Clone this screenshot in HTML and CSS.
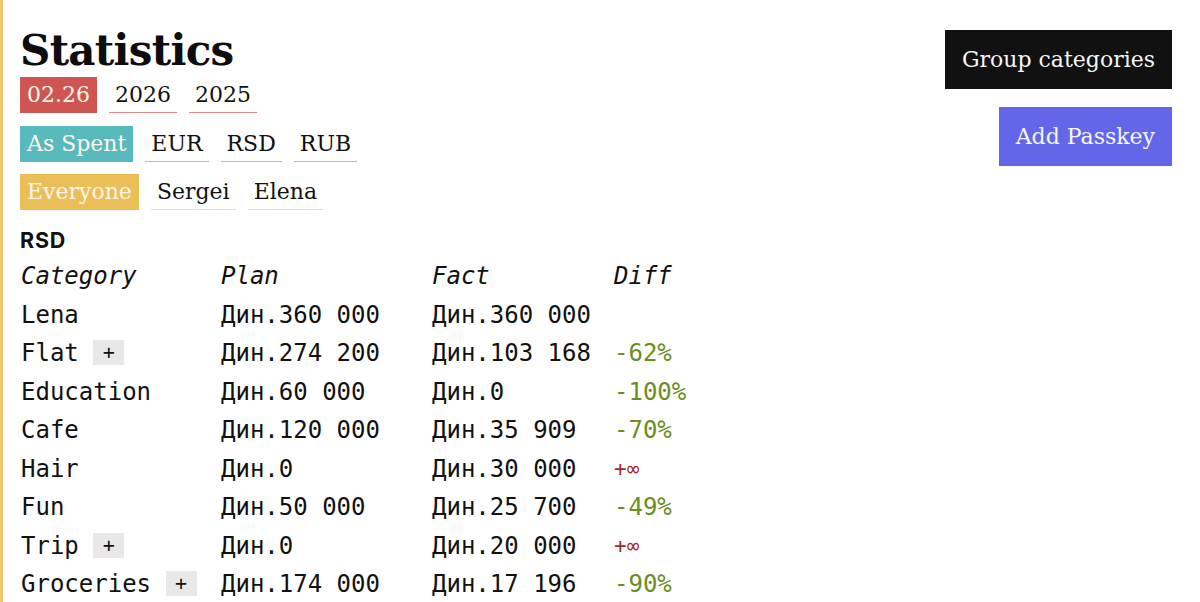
FILE: index.html
```html
<!DOCTYPE html>
<html lang="en">
<head>
<meta charset="utf-8">
<title>Statistics</title>
<link rel="stylesheet" href="styles.css">
</head>
<body>
<div class="page">
  <div class="main">
    <h1 class="title">Statistics</h1>
    <div class="tabs">
      <span class="tab tab-red active">02.26</span>
      <span class="tab tab-red">2026</span>
      <span class="tab tab-red">2025</span>
    </div>
    <div class="tabs">
      <span class="tab tab-teal active">As Spent</span>
      <span class="tab tab-teal">EUR</span>
      <span class="tab tab-teal">RSD</span>
      <span class="tab tab-teal">RUB</span>
    </div>
    <div class="tabs">
      <span class="tab tab-yellow active">Everyone</span>
      <span class="tab tab-yellow">Sergei</span>
      <span class="tab tab-yellow">Elena</span>
    </div>
    <h2 class="currency">RSD</h2>
    <div class="table">
      <div class="cell head">Category</div><div class="cell head">Plan</div><div class="cell head">Fact</div><div class="cell head">Diff</div>
      <div class="cell">Lena</div><div class="cell">Дин.360 000</div><div class="cell">Дин.360 000</div><div class="cell"></div>
      <div class="cell">Flat <span class="plus">+</span></div><div class="cell">Дин.274 200</div><div class="cell">Дин.103 168</div><div class="cell good">-62%</div>
      <div class="cell">Education</div><div class="cell">Дин.60 000</div><div class="cell">Дин.0</div><div class="cell good">-100%</div>
      <div class="cell">Cafe</div><div class="cell">Дин.120 000</div><div class="cell">Дин.35 909</div><div class="cell good">-70%</div>
      <div class="cell">Hair</div><div class="cell">Дин.0</div><div class="cell">Дин.30 000</div><div class="cell bad">+∞</div>
      <div class="cell">Fun</div><div class="cell">Дин.50 000</div><div class="cell">Дин.25 700</div><div class="cell good">-49%</div>
      <div class="cell">Trip <span class="plus">+</span></div><div class="cell">Дин.0</div><div class="cell">Дин.20 000</div><div class="cell bad">+∞</div>
      <div class="cell">Groceries <span class="plus">+</span></div><div class="cell">Дин.174 000</div><div class="cell">Дин.17 196</div><div class="cell good">-90%</div>
    </div>
  </div>
  <div class="actions">
    <button class="btn btn-dark">Group categories</button>
    <button class="btn btn-indigo">Add Passkey</button>
  </div>
</div>
</body>
</html>
```

FILE: styles.css
```css
html, body {
  margin: 0;
  padding: 0;
  background: #ffffff;
  height: 100%;
  overflow: hidden;
}
body {
  border-left: 3px solid #f1c872;
  box-sizing: border-box;
  color: #111111;
  font-family: "DejaVu Serif", serif;
}
.page {
  display: flex;
  justify-content: space-between;
  align-items: flex-start;
  padding: 30px 28px 0 17px;
}
.main {
  display: flex;
  flex-direction: column;
  align-items: flex-start;
}
.title {
  margin: 0 0 5px 0;
  font-family: "DejaVu Serif", serif;
  font-weight: bold;
  font-size: 42px;
  line-height: 42px;
  letter-spacing: -0.7px;
  color: #0d0d0d;
}
.tabs {
  display: flex;
  gap: 12px;
  margin-bottom: 12.5px;
}
.tab {
  display: block;
  font-size: 22px;
  line-height: 35px;
  padding: 0 6px;
  border-bottom: 1px solid transparent;
  color: #111111;
}
.tab-red { border-bottom-color: #e48a88; }
.tab-teal { border-bottom-color: #8ccbd1; }
.tab-yellow { border-bottom-color: #f3ddb0; }
.tab.active { padding: 0 7px; color: #fff6ee; }
.tab-red.active { background: #cf5552; border-bottom-color: #cf5552; }
.tab-teal.active { background: #58babc; border-bottom-color: #58babc; }
.tab-yellow.active { background: #ecbe58; border-bottom-color: #ecbe58; }
.currency {
  margin: 5.5px 0 5px 0;
  font-family: Inter, "Noto Sans", sans-serif;
  font-weight: bold;
  font-size: 21.5px;
  line-height: 24px;
  letter-spacing: 0.8px;
}
.table {
  display: grid;
  grid-template-columns: 200px 211px 182px auto;
  font-family: "DejaVu Sans Mono", monospace;
  font-size: 24px;
}
.cell {
  height: 38.55px;
  line-height: 38.55px;
  white-space: pre;
  padding-left: 1px;
}
.head {
  font-style: italic;
}
.plus {
  display: inline-block;
  width: 31px;
  height: 25px;
  line-height: 25px;
  text-align: center;
  background: #e8e8e8;
  font-size: 20px;
  vertical-align: 2px;
}
.good { color: #6b8e23; }
.bad { color: #a52a2a; font-size: 21px; }
.actions {
  display: flex;
  flex-direction: column;
  align-items: flex-end;
  gap: 18px;
}
.btn {
  font-family: "DejaVu Serif", serif;
  font-size: 22px;
  height: 59px;
  padding: 0 17px;
  border: none;
  color: #f5f5f5;
  cursor: pointer;
}
.btn-dark { background: #111111; }
.btn-indigo { background: #6366e9; }
```
